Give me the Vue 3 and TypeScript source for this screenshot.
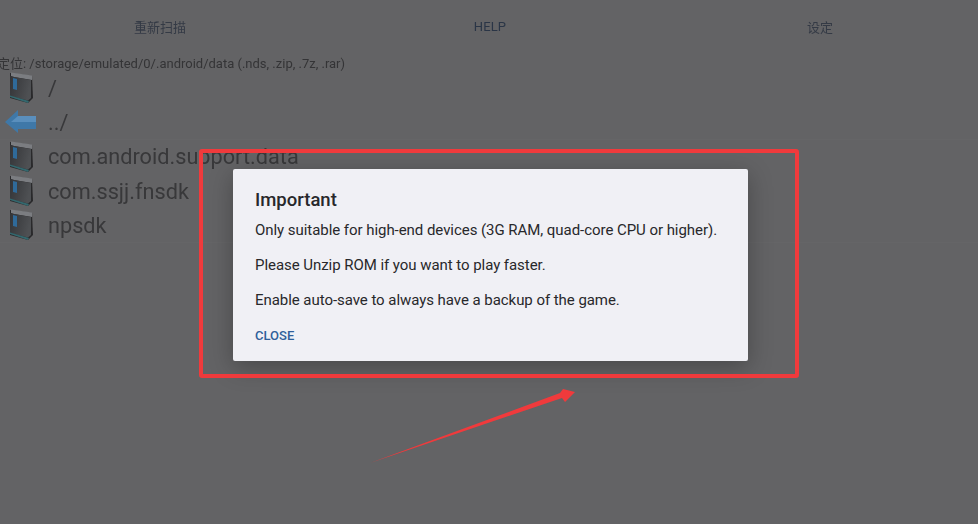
<template>
  <div class="screen">
    <!-- 工具栏 -->
    <div class="toolbar">
      <div class="tool-btn">重新扫描</div>
      <div class="tool-btn strong">HELP</div>
      <div class="tool-btn">设定</div>
    </div>

    <div class="path-line">定位: /storage/emulated/0/.android/data (.nds, .zip, .7z, .rar)</div>

    <!-- 文件列表 -->
    <div class="file-list">
      <div
        v-for="item in files"
        :key="item.name"
        class="file-row"
        :class="{ 'with-rule': item.rule }"
      >
        <svg
          v-if="item.kind === 'folder'"
          class="file-icon"
          viewBox="0 0 30 34"
        >
          <defs>
            <linearGradient
              id="folderPage"
              x1="0"
              y1="0"
              x2="1"
              y2="0.3"
            >
              <stop
                offset="0"
                stop-color="#333437"
              />
              <stop
                offset="1"
                stop-color="#4e5053"
              />
            </linearGradient>
          </defs>
          <path
            d="M4 2 L26 5 L27 27 L22 32 L4 27 Z"
            fill="#29292b"
          />
          <path
            d="M5 1.5 L26 4.5 V9 L8 6 L5 5 Z"
            fill="#7b7d81"
          />
          <path
            d="M4 5 L8 6 L25 9 V27 L22 29.5 L4 25 Z"
            fill="url(#folderPage)"
          />
          <path
            d="M7 7 L11 8 V19 L7 18 Z"
            fill="#2f6a9a"
          />
          <path
            d="M4 26 L22 32 L23 30 L4 24.5 Z"
            fill="#34686e"
          />
        </svg>
        <svg
          v-else
          class="file-icon"
          viewBox="0 0 30 34"
        >
          <path
            d="M-1 17 L12 5 V11 L30 11 V24 L12 24 V28 Z"
            fill="#3f78a8"
          />
          <path
            d="M12 11 L30 11 V17 L5 17 Z"
            fill="#5a8fbd"
          />
        </svg>
        <span class="file-name">{{ item.name }}</span>
      </div>
    </div>

    <!-- 对话框 -->
    <div class="dialog">
      <div class="dialog-title">Important</div>
      <p>Only suitable for high-end devices (3G RAM, quad-core CPU or higher).</p>
      <p>Please Unzip ROM if you want to play faster.</p>
      <p>Enable auto-save to always have a backup of the game.</p>
      <div class="dialog-close">CLOSE</div>
    </div>

    <!-- 红框和箭头标注 -->
    <div class="mark-box"></div>
    <svg
      class="mark-arrow"
      viewBox="0 0 978 524"
    >
      <path
        d="M370 463 L560 393 L563 389 L575 392 L565 402 L562 398 Z"
        fill="#f03a3c"
      />
    </svg>
  </div>
</template>

<script setup lang="ts">
interface FileItem {
  name: string
  kind: 'folder' | 'back'
  rule?: boolean
}

const files: FileItem[] = [
  { name: '/', kind: 'folder' },
  { name: '../', kind: 'back', rule: true },
  { name: 'com.android.support.data', kind: 'folder' },
  { name: 'com.ssjj.fnsdk', kind: 'folder' },
  { name: 'npsdk', kind: 'folder', rule: true },
]
</script>

<style scoped>
.screen {
  position: relative;
  width: 978px;
  height: 524px;
  overflow: hidden;
  background: #636365;
  font-family: Roboto, "Noto Sans CJK SC", sans-serif;
}

.toolbar {
  display: flex;
  width: 990px;
  height: 52px;
  margin-left: -5px;
  filter: blur(0.35px);
}

.tool-btn {
  flex: 1;
  display: flex;
  align-items: center;
  justify-content: center;
  font-size: 13px;
  color: #343a45;
}

.strong {
  color: #2a3546;
  letter-spacing: 0.1px;
}

.path-line {
  height: 16px;
  margin-top: 3px;
  margin-left: -3px;
  font-size: 13px;
  line-height: 18px;
  color: #343436;
  white-space: nowrap;
  filter: blur(0.3px);
}

.file-row {
  display: flex;
  align-items: center;
  gap: 12px;
  box-sizing: border-box;
  height: 34.4px;
  padding-left: 6px;
}

.with-rule {
  border-bottom: 1px solid #656567;
}

.file-icon {
  flex: none;
  width: 30px;
  height: 34px;
  overflow: visible;
  filter: blur(0.5px);
}

.file-name {
  font-size: 21.7px;
  color: #38383a;
  filter: blur(0.3px);
}

.dialog {
  position: absolute;
  left: 233px;
  top: 169px;
  width: 515px;
  height: 192px;
  box-sizing: border-box;
  padding: 20px 22px 0;
  border-radius: 2px;
  background: #f0f0f5;
  box-shadow: 0 6px 24px rgba(0, 0, 0, 0.28);
  color: #28282b;
}

.dialog-title {
  font-size: 18.5px;
  font-weight: 500;
  line-height: 22px;
}

.dialog p {
  margin: 0;
  padding-top: 14px;
  font-size: 15px;
  letter-spacing: -0.05px;
  line-height: 21px;
}

.dialog-title + p {
  padding-top: 9px;
}

.dialog-close {
  margin-top: 16px;
  font-size: 13px;
  font-weight: 500;
  line-height: 18px;
  color: #2f5f9a;
}

.mark-box {
  position: absolute;
  left: 199px;
  top: 149px;
  width: 600px;
  height: 229px;
  box-sizing: border-box;
  border: 4px solid #f03a3c;
  border-radius: 3px;
}

.mark-arrow {
  position: absolute;
  inset: 0;
  width: 978px;
  height: 524px;
}
</style>
